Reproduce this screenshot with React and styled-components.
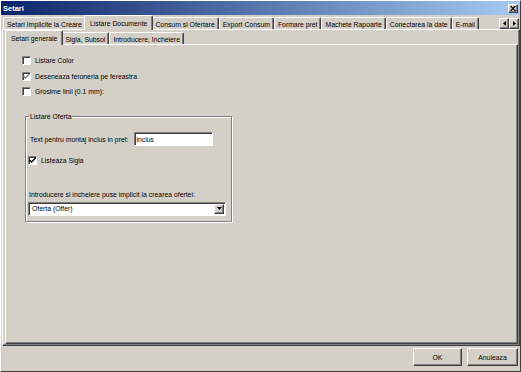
import React from "react";
import styled, { createGlobalStyle } from "styled-components";

const GlobalStyle = createGlobalStyle`
  html, body {
    margin: 0;
    padding: 0;
    background: #d4d0c8;
  }
  body {
    font-family: "Liberation Sans", Arial, sans-serif;
    font-size: 6.85px;
    color: #000;
  }
`;

const raised = `
  border-top: 1px solid #fff;
  border-left: 1px solid #fff;
  border-right: 1px solid #404040;
  border-bottom: 1px solid #404040;
  box-shadow: inset -1px -1px 0 #808080;
`;

const sunken = `
  border-top: 1px solid #808080;
  border-left: 1px solid #808080;
  border-right: 1px solid #fff;
  border-bottom: 1px solid #fff;
  box-shadow: inset 1px 1px 0 #404040;
`;

const Window = styled.div`
  width: 521px;
  height: 372px;
  box-sizing: border-box;
  display: flex;
  flex-direction: column;
  background: #d4d0c8;
  border-left: 1px solid #fff;
  border-top: 1px solid #fff;
  border-right: 1px solid #404040;
  border-bottom: 1px solid #404040;
  overflow: hidden;
`;

const TitleBar = styled.div`
  height: 14px;
  flex: none;
  display: flex;
  align-items: center;
  padding: 0 2px 0 2px;
  background: linear-gradient(to right, #0a246a, #a6caf0);
  color: #fff;
  font-weight: bold;
  font-size: 7.5px;
`;

const Title = styled.span`
  flex: 1;
`;

const SmallButton = styled.div`
  width: 10px;
  height: ${(p) => p.$h || 9}px;
  box-sizing: border-box;
  background: #d4d0c8;
  ${raised}
  display: flex;
  align-items: center;
  justify-content: center;
`;

const Strip = styled.div`
  height: 14px;
  flex: none;
  display: flex;
  align-items: flex-end;
  padding-left: ${(p) => p.$inset || 0}px;
`;

const Tab = styled.div`
  position: relative;
  z-index: ${(p) => (p.$active ? 2 : 1)};
  box-sizing: border-box;
  height: ${(p) => (p.$active ? 15 : 12)}px;
  margin: 0 ${(p) => (p.$active ? -2 : 0)}px ${(p) => (p.$active ? -1 : 0)}px;
  padding: ${(p) => (p.$active ? 0 : 1)}px ${(p) => (p.$active ? 5 : 3)}px 0;
  display: flex;
  align-items: center;
  white-space: nowrap;
  background: #d4d0c8;
  border-top: 1px solid #fff;
  border-left: 1px solid #fff;
  border-right: 1px solid #404040;
  box-shadow: inset -1px 0 0 #808080;
  border-radius: 2px 2px 0 0;
`;

const Arrows = styled.div`
  margin-left: auto;
  margin-right: 1px;
  align-self: center;
  margin-top: 2px;
  display: flex;
`;

const MainPanel = styled.div`
  flex: 1;
  display: flex;
  flex-direction: column;
  margin-left: 1px;
  padding: 0 1px 1px 2px;
  ${raised}
`;

const SubPanel = styled.div`
  flex: 1;
  ${raised}
  padding: 8px 0 0 16px;
  display: flex;
  flex-direction: column;
  align-items: flex-start;
`;

const CheckRow = styled.div`
  height: 15.5px;
  display: flex;
  align-items: center;
  gap: 4px;
  margin-left: ${(p) => p.$indent || 0}px;
  margin-top: ${(p) => p.$top || 0}px;
`;

const Box = styled.span`
  width: 9px;
  height: 9px;
  box-sizing: border-box;
  background: #fff;
  ${sunken}
  display: flex;
  align-items: center;
  justify-content: center;
`;

const GroupBox = styled.fieldset`
  margin: 12px 0 0 3px;
  width: 207px;
  box-sizing: border-box;
  padding: 0 2px 5px;
  border: 1px solid #808080;
  box-shadow: inset 1px 1px 0 #fff, 1px 1px 0 #fff;
  min-inline-size: 0;
`;

const Legend = styled.legend`
  padding: 0 1px;
  margin-left: 1px;
  line-height: 9px;
  background: #d4d0c8;
`;

const FieldRow = styled.div`
  display: flex;
  align-items: center;
  gap: 5px;
  margin: 11.5px 0 0 2px;
`;

const TextBox = styled.div`
  width: 79px;
  height: 14px;
  box-sizing: border-box;
  background: #fff;
  ${sunken}
  padding-left: 2px;
  display: flex;
  align-items: center;
`;

const Caption = styled.div`
  line-height: 9px;
  margin: ${(p) => p.$top || 0}px 0 0 1px;
`;

const Select = styled.div`
  margin-top: 2.5px;
  width: 198px;
  height: 14px;
  box-sizing: border-box;
  background: #fff;
  ${sunken}
  padding: 1px 1px 1px 3px;
  display: flex;
  align-items: center;
`;

const SelectText = styled.span`
  flex: 1;
`;

const Footer = styled.div`
  height: 23px;
  flex: none;
  display: flex;
  justify-content: flex-end;
  align-items: flex-start;
  gap: 5px;
  padding: 2px 2px 0 0;
`;

const Button = styled.div`
  width: ${(p) => p.$w}px;
  height: 18px;
  box-sizing: border-box;
  ${raised}
  display: flex;
  align-items: center;
  justify-content: center;
`;

const Check = ({ color = "#000" }) => (
  <svg width="7" height="7" viewBox="0 0 7 7">
    <path d="M0.5 3 L2.5 5 L6.5 1" fill="none" stroke={color} strokeWidth="1.4" />
  </svg>
);

const Tri = ({ dir }) => {
  const d = {
    left: "M3 0 L0 2.5 L3 5 Z",
    right: "M0 0 L3 2.5 L0 5 Z",
    down: "M0 0 L5 0 L2.5 3 Z",
  }[dir];
  const w = dir === "down" ? 5 : 3;
  const h = dir === "down" ? 3 : 5;
  return (
    <svg width={w} height={h} viewBox={`0 0 ${w} ${h}`}>
      <path d={d} fill="#000" />
    </svg>
  );
};

const CheckBox = ({ label, checked, color, indent, top }) => (
  <CheckRow $indent={indent} $top={top}>
    <Box>{checked && <Check color={color} />}</Box>
    <span>{label}</span>
  </CheckRow>
);

const mainTabs = [
  "Setari Implicite la Creare",
  "Listare Documente",
  "Consum si Ofertare",
  "Export Consum",
  "Formare pret",
  "Machete Rapoarte",
  "Conectarea la date",
  "E-mail",
];

const subTabs = ["Setari generale", "Sigla, Subsol", "Introducere, Incheiere"];

export default function App() {
  return (
    <>
      <GlobalStyle />
      <Window>
        <TitleBar>
          <Title>Setari</Title>
          <SmallButton>
            <svg width="6" height="5" viewBox="0 0 6 5">
              <path d="M0.5 0 L5.5 5 M5.5 0 L0.5 5" stroke="#000" strokeWidth="1.2" />
            </svg>
          </SmallButton>
        </TitleBar>
        <Strip $inset={2}>
          {mainTabs.map((t, i) => (
            <Tab key={t} $active={i === 1}>
              {t}
            </Tab>
          ))}
          <Arrows>
            <SmallButton $h={11}>
              <Tri dir="left" />
            </SmallButton>
            <SmallButton $h={11}>
              <Tri dir="right" />
            </SmallButton>
          </Arrows>
        </Strip>
        <MainPanel>
          <Strip $inset={2}>
            {subTabs.map((t, i) => (
              <Tab key={t} $active={i === 0}>
                {t}
              </Tab>
            ))}
          </Strip>
          <SubPanel>
            <CheckBox label="Listare Color" />
            <CheckBox label="Deseneaza feroneria pe fereastra" checked color="#808080" />
            <CheckBox label="Grosime linii (0.1 mm):" />
            <GroupBox>
              <Legend>Listare Oferta</Legend>
              <FieldRow>
                <span>Text pentru montaj inclus in pret:</span>
                <TextBox>inclus</TextBox>
              </FieldRow>
              <CheckBox label="Listeaza Sigla" checked indent={0} top={7} />
              <Caption $top={21.5}>
                Introducere si incheiere puse implicit la crearea ofertei:
              </Caption>
              <Select>
                <SelectText>Oferta (Offer)</SelectText>
                <SmallButton $h={10}>
                  <Tri dir="down" />
                </SmallButton>
              </Select>
            </GroupBox>
          </SubPanel>
        </MainPanel>
        <Footer>
          <Button $w={49}>OK</Button>
          <Button $w={51}>Anuleaza</Button>
        </Footer>
      </Window>
    </>
  );
}
